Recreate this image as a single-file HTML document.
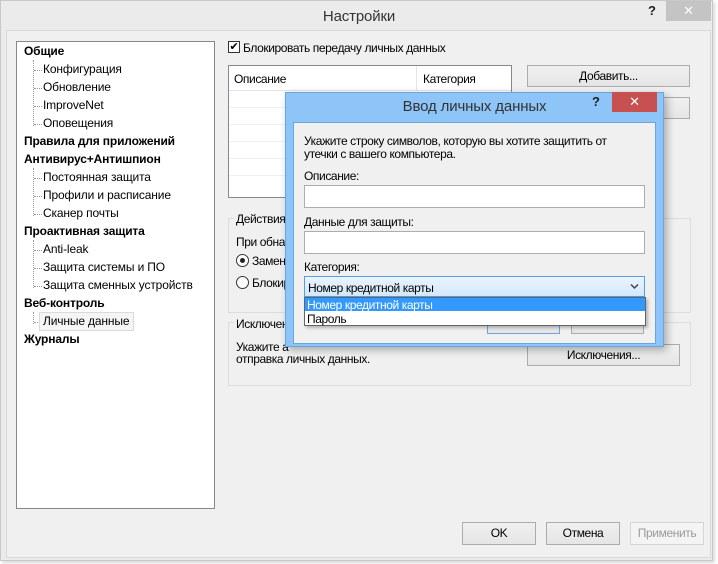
<!DOCTYPE html>
<html><head><meta charset="utf-8"><style>
*{box-sizing:border-box;margin:0;padding:0}
body{width:718px;height:564px;background:#fff;font-family:"Liberation Sans","DejaVu Sans",sans-serif;font-size:12px;color:#000;position:relative;overflow:hidden;letter-spacing:-0.15px}
.a{position:absolute}
.win{left:0;top:0;width:713px;height:561px;background:#ebebeb;border:1px solid #c8c8c8;box-shadow:2px 2px 3px rgba(0,0,0,.15)}
.btn{position:absolute;border:1px solid #acacac;background:linear-gradient(#f0f0f0,#e5e5e5);text-align:center;line-height:20px;font-size:12px}
.t{position:absolute;white-space:nowrap}
.b{font-weight:bold}
.dot{position:absolute;border-left:1px dotted #999}
.hd{position:absolute;border-top:1px dotted #999;width:8px}
.grp{position:absolute;border:1px solid #dcdcdc}
.inp{position:absolute;background:#fff;border:1px solid #abadb3}
.r{letter-spacing:-0.4px}
</style></head><body>
<div class="a win"></div>
<div class="t" style="left:0;width:718px;top:8px;text-align:center;font-size:15px;color:#333">Настройки</div>
<div class="t b" style="left:648px;top:3px;font-size:13px;color:#222">?</div>
<div class="a" style="left:666px;top:1px;width:45px;height:20px;background:#c4c4c4;color:#fff;text-align:center;line-height:20px;font-size:13px">✕</div>
<div class="a" style="left:6px;top:30px;width:705px;height:528px;background:#f0f0f0;border:1px solid #dadada"></div>

<div class="a" style="left:16px;top:41px;width:199px;height:468px;background:#fff;border:1px solid #828790"></div>
<div class="dot" style="left:33px;top:60px;height:66px"></div>
<div class="dot" style="left:33px;top:168px;height:48px"></div>
<div class="dot" style="left:33px;top:240px;height:48px"></div>
<div class="dot" style="left:33px;top:312px;height:12px"></div>
<div class="hd" style="left:34px;top:70px"></div><div class="hd" style="left:34px;top:88px"></div><div class="hd" style="left:34px;top:106px"></div><div class="hd" style="left:34px;top:124px"></div>
<div class="hd" style="left:34px;top:178px"></div><div class="hd" style="left:34px;top:196px"></div><div class="hd" style="left:34px;top:214px"></div>
<div class="hd" style="left:34px;top:250px"></div><div class="hd" style="left:34px;top:268px"></div><div class="hd" style="left:34px;top:286px"></div>
<div class="hd" style="left:34px;top:322px"></div>
<div class="t b" style="left:24px;top:44px">Общие</div>
<div class="t" style="left:43px;top:62px">Конфигурация</div>
<div class="t" style="left:43px;top:80px">Обновление</div>
<div class="t" style="left:43px;top:98px">ImproveNet</div>
<div class="t" style="left:43px;top:116px">Оповещения</div>
<div class="t b" style="left:24px;top:134px">Правила для приложений</div>
<div class="t b" style="left:24px;top:152px">Антивирус+Антишпион</div>
<div class="t" style="left:43px;top:170px">Постоянная защита</div>
<div class="t" style="left:43px;top:188px">Профили и расписание</div>
<div class="t" style="left:43px;top:206px">Сканер почты</div>
<div class="t b" style="left:24px;top:224px">Проактивная защита</div>
<div class="t" style="left:43px;top:242px">Anti-leak</div>
<div class="t" style="left:43px;top:260px">Защита системы и ПО</div>
<div class="t" style="left:43px;top:278px">Защита сменных устройств</div>
<div class="t b" style="left:24px;top:296px">Веб-контроль</div>
<div class="a" style="left:39px;top:312px;width:95px;height:19px;background:#f5f5f5;border:1px solid #dadada"></div>
<div class="t" style="left:43px;top:314px">Личные данные</div>
<div class="t b" style="left:24px;top:332px">Журналы</div>

<div class="a" style="left:228px;top:41px;width:12px;height:12px;background:#fff;border:1px solid #333;font-size:11px;line-height:10px;text-align:center">✔</div>
<div class="t r" style="left:243px;top:41px">Блокировать передачу личных данных</div>
<div class="a" style="left:228px;top:65px;width:284px;height:133px;background:#fff;border:1px solid #828790"></div>
<div class="a" style="left:416px;top:66px;height:24px;border-left:1px solid #e5e5e5"></div>
<div class="a" style="left:229px;top:90px;width:282px;border-top:1px solid #e5e5e5"></div>
<div class="a" style="left:229px;top:107px;width:282px;border-top:1px solid #f0f0f0"></div>
<div class="a" style="left:229px;top:124px;width:282px;border-top:1px solid #f0f0f0"></div>
<div class="a" style="left:229px;top:141px;width:282px;border-top:1px solid #f0f0f0"></div>
<div class="a" style="left:229px;top:158px;width:282px;border-top:1px solid #f0f0f0"></div>
<div class="a" style="left:229px;top:175px;width:282px;border-top:1px solid #f0f0f0"></div>
<div class="t r" style="left:234px;top:72px">Описание</div>
<div class="t r" style="left:423px;top:72px">Категория</div>
<div class="btn r" style="left:527px;top:65px;width:163px;height:22px">Добавить...</div>
<div class="btn" style="left:527px;top:97px;width:163px;height:22px"></div>
<div class="grp" style="left:228px;top:218px;width:463px;height:95px"></div>
<div class="t r" style="left:234px;top:212px;background:#f0f0f0;padding:0 2px">Действия</div>
<div class="t r" style="left:236px;top:235px">При обнар</div>
<div class="a" style="left:236px;top:254px;width:13px;height:13px;border-radius:50%;border:1px solid #333;background:#fff"><div class="a" style="left:3px;top:3px;width:5px;height:5px;border-radius:50%;background:#222"></div></div>
<div class="t r" style="left:252px;top:254px">Заменя</div>
<div class="a" style="left:236px;top:276px;width:13px;height:13px;border-radius:50%;border:1px solid #333;background:#fff"></div>
<div class="t r" style="left:252px;top:276px">Блокир</div>
<div class="grp" style="left:228px;top:322px;width:463px;height:64px"></div>
<div class="t r" style="left:234px;top:317px;background:#f0f0f0;padding:0 2px">Исключен</div>
<div class="t r" style="left:236px;top:340px">Укажите а</div>
<div class="t r" style="left:236px;top:352px">отправка личных данных.</div>
<div class="btn r" style="left:527px;top:344px;width:153px;height:22px">Исключения...</div>

<div class="btn r" style="left:462px;top:522px;width:74px;height:23px">OK</div>
<div class="btn r" style="left:546px;top:522px;width:74px;height:23px">Отмена</div>
<div class="btn r" style="left:630px;top:522px;width:74px;height:23px;color:#9a9a9a;border-color:#d5d5d5;background:#f4f4f4">Применить</div>

<div class="a" style="left:285px;top:92px;width:379px;height:255px;background:#8ec5f9;border:1px solid #6aa6de;box-shadow:3px 3px 8px rgba(0,0,0,.3)"></div>
<div class="t" style="left:285px;width:379px;top:98px;text-align:center;font-size:15px;color:#333">Ввод личных данных</div>
<div class="t b" style="left:592px;top:94px;font-size:13px;color:#222">?</div>
<div class="a" style="left:612px;top:92px;width:45px;height:20px;background:#c75050;color:#fff;text-align:center;line-height:20px;font-size:13px">✕</div>
<div class="a" style="left:293px;top:122px;width:363px;height:222px;background:#f0f0f0;border:1px solid #6aa6de"></div>
<div class="t r" style="left:304px;top:134px">Укажите строку символов, которую вы хотите защитить от</div>
<div class="t r" style="left:304px;top:147px">утечки с вашего компьютера.</div>
<div class="t r" style="left:304px;top:169px">Описание:</div>
<div class="inp" style="left:304px;top:185px;width:341px;height:23px"></div>
<div class="t r" style="left:304px;top:215px">Данные для защиты:</div>
<div class="inp" style="left:304px;top:231px;width:341px;height:23px"></div>
<div class="t r" style="left:304px;top:260px">Категория:</div>
<div class="btn" style="left:487px;top:316px;width:73px;height:18px;border-color:#6aa6de"></div>
<div class="btn" style="left:571px;top:316px;width:73px;height:18px"></div>
<div class="a" style="left:304px;top:276px;width:341px;height:21px;border:1px solid #569de5;background:linear-gradient(#eaf4fd,#d2e8fb)"></div>
<div class="t r" style="left:308px;top:281px">Номер кредитной карты</div>
<svg class="a" style="left:630px;top:283px" width="9" height="7"><path d="M1 1.5 L4.5 5 L8 1.5" fill="none" stroke="#444" stroke-width="1.5"/></svg>
<div class="a" style="left:304px;top:297px;width:342px;height:29px;background:#fff;border:1px solid #646464;box-shadow:2px 2px 3px rgba(0,0,0,.25)"></div>
<div class="a" style="left:305px;top:298px;width:340px;height:13px;background:#3399ff"></div>
<div class="t r" style="left:307px;top:298px;color:#fff">Номер кредитной карты</div>
<div class="t r" style="left:307px;top:312px">Пароль</div>
</body></html>
